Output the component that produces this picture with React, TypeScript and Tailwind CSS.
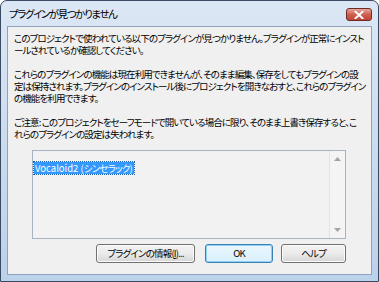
import React from "react";

const font = "[font-family:'Noto_Sans_CJK_JP','Noto_Sans',sans-serif] [font-feature-settings:'palt']";

function Btn({ children, w, def }: { children: React.ReactNode; w: string; def?: boolean }) {
  return (
    <div
      className={`${w} h-[19px] rounded-[3px] border flex items-center justify-center text-[9.5px] tracking-[-0.8px] leading-none text-black ${
        def
          ? "border-[#3c7fb1] shadow-[inset_0_0_0_1px_#8ed2f6] bg-gradient-to-b from-[#eaf6fd] to-[#d9f0fc]"
          : "border-[#707070] shadow-[inset_0_0_0_1px_#fcfcfc] bg-gradient-to-b from-[#f2f2f2] via-[#ebebeb] to-[#d6d6d6]"
      }`}
    >
      {children}
    </div>
  );
}

export default function App() {
  return (
    <div className={`w-[379px] h-[282px] bg-white ${font}`}>
      <div className="w-full h-full rounded-t-[7px] border border-[#3a4a60] bg-gradient-to-b from-[#dce7f5] via-[#cbdcef] to-[#bcd1ea] flex flex-col">
        <div className="h-[25px] flex items-start justify-between pl-[8px] pr-[6px]">
          <div className="pt-[5px] text-[10.5px] leading-[16px] text-black tracking-[-1.4px]">プラグインが見つかりません</div>
          <div className="mt-[7px] w-[26px] h-[13px] rounded-[3px] border border-[#6b2a22] bg-gradient-to-b from-[#e4a79c] via-[#cf5f4f] to-[#c2443a] flex items-center justify-center">
            <svg width="10" height="8" viewBox="0 0 10 8">
              <path d="M1.5 0.8 L8.5 7.2 M8.5 0.8 L1.5 7.2" stroke="#ffffff" strokeWidth="2" strokeLinecap="square" />
            </svg>
          </div>
        </div>
        <div className="flex-1 mx-[6px] mb-[6px] border border-[#8da3bf] bg-[#f0f0f0] flex flex-col">
          <div className="pl-[6px] pt-[5px] text-[9.5px] leading-[12px] text-black whitespace-nowrap tracking-[-0.9px]">
            <p className="mb-[12px]">
              このプロジェクトで使われている以下のプラグインが見つかりません。プラグインが正常にインスト
              <br />
              ールされているか確認してください。
            </p>
            <p className="mb-[12px]">
              これらのプラグインの機能は現在利用できませんが、そのまま編集、保存をしてもプラグインの設
              <br />
              定は保持されます。プラグインのインストール後にプロジェクトを開きなおすと、これらのプラグイン
              <br />
              の機能を利用できます。
            </p>
            <p>
              ご注意: このプロジェクトをセーフモードで開いている場合に限り、そのまま上書き保存すると、こ
              <br />
              れらのプラグインの設定は失われます。
            </p>
          </div>
          <div className="ml-[24px] mt-[10px] w-[314px] h-[89px] border border-[#a7b3c2] bg-[#f2f2f2] flex">
            <div className="flex-1 pl-[1px] pt-[2px]">
              <div className="inline-block bg-[#3399ff] text-white text-[9.5px] leading-[12px] px-[1px] outline-1 outline-dotted outline-[#1d5fa8] whitespace-nowrap">
                Vocaloid2 (<span className="tracking-[-0.8px]">シンセラック</span>)
              </div>
            </div>
            <div className="w-[16px] border-l border-[#e2e2e2] bg-[#f4f4f4] flex flex-col justify-between items-center py-[6px]">
              <svg width="7" height="4" viewBox="0 0 7 4">
                <path d="M3.5 0 L7 4 L0 4 Z" fill="#a3a3a3" />
              </svg>
              <svg width="7" height="4" viewBox="0 0 7 4">
                <path d="M0 0 L7 0 L3.5 4 Z" fill="#a3a3a3" />
              </svg>
            </div>
          </div>
          <div className="mt-[5px] flex justify-end pr-[25px]">
            <Btn w="w-[99px]">
              プラグインの情報(<span className="underline">I</span>)...
            </Btn>
            <div className="w-[10px]" />
            <Btn w="w-[68px]" def>
              OK
            </Btn>
            <div className="w-[8px]" />
            <Btn w="w-[65px]">ヘルプ</Btn>
          </div>
        </div>
      </div>
    </div>
  );
}
